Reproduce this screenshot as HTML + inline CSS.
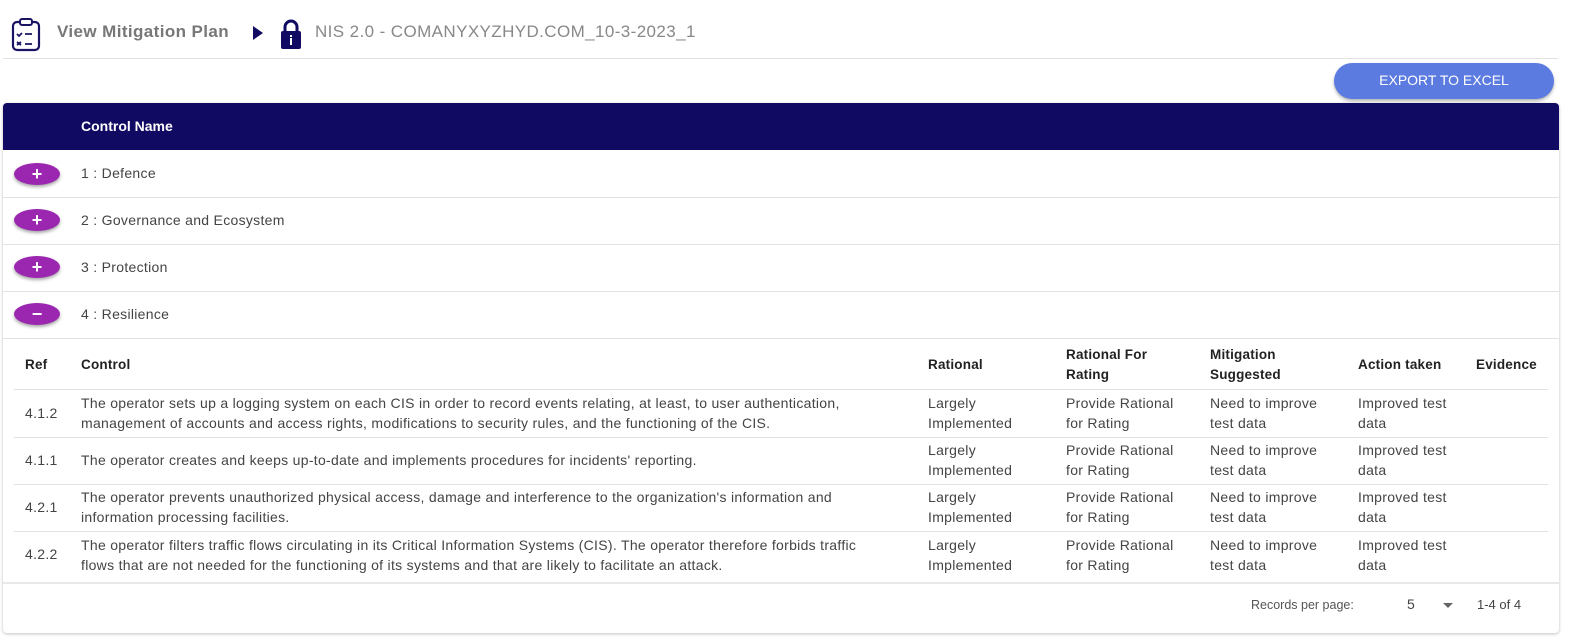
<!DOCTYPE html>
<html><head><meta charset="utf-8"><style>
*{margin:0;padding:0;box-sizing:border-box}
body{width:1588px;height:639px;background:#fff;font-family:"Liberation Sans",sans-serif;position:relative;overflow:hidden;color:#333}
.a{position:absolute;white-space:nowrap}
.t{font-size:14px;color:#444;line-height:20px;letter-spacing:.3px}
.b{font-weight:bold;color:#222;font-size:13.5px;line-height:20px;letter-spacing:.2px}
.btn{position:absolute;left:14px;width:46px;height:22px;border-radius:50%;background:#9b27b0;box-shadow:0 2px 3px rgba(0,0,0,.35);color:#fff;font-weight:bold;text-align:center;font-size:18px;line-height:22px}
.hl{position:absolute;height:1px;background:#e2e2e2}
</style></head><body>
<svg class="a" style="left:11px;top:18px" width="30" height="34" viewBox="0 0 30 34"><rect x="2" y="4" width="26" height="28" rx="4" fill="none" stroke="#1a1464" stroke-width="2.2"/><rect x="9" y="1" width="12" height="6" rx="2" fill="#fff" stroke="#1a1464" stroke-width="2"/><path d="M6 16l2 2 3-3M14 16h7M6 24l4 3M10 24l-4 3M14 26h7" stroke="#1a1464" stroke-width="1.8" fill="none"/></svg>
<div class="a" style="left:57px;top:22px;font-size:17px;font-weight:bold;color:#777;letter-spacing:.4px">View Mitigation Plan</div>
<svg class="a" style="left:252px;top:25px" width="12" height="16"><path d="M1 1L11 8L1 15Z" fill="#110a63"/></svg>
<svg class="a" style="left:280px;top:18px" width="22" height="32" viewBox="0 0 22 32"><path d="M5 14V9a6 6 0 0 1 12 0v5" stroke="#110a63" stroke-width="3" fill="none"/><rect x="1" y="13" width="20" height="18" rx="2" fill="#110a63"/><rect x="10" y="20" width="2" height="7" fill="#fff"/><rect x="10" y="17" width="2" height="2" fill="#fff"/></svg>
<div class="a" style="left:315px;top:22px;font-size:17px;color:#888;letter-spacing:.4px">NIS 2.0 - COMANYXYZHYD.COM_10-3-2023_1</div>
<div class="hl" style="left:3px;top:58px;width:1555px"></div>
<div class="a" style="left:1334px;top:63px;width:220px;height:36px;border-radius:18px;background:#5b7be0;color:#fff;font-size:14px;text-align:center;line-height:34px;box-shadow:0 2px 3px rgba(0,0,0,.3)">EXPORT TO EXCEL</div>
<div class="a" style="left:3px;top:103px;width:1556px;height:530px;border-radius:4px;box-shadow:0 1px 3px rgba(0,0,0,.25)"></div>
<div class="a" style="left:3px;top:103px;width:1556px;height:47px;background:#110a63;border-radius:4px 4px 0 0"></div>
<div class="a" style="left:81px;top:116px;color:#fff;font-weight:bold;font-size:14px;line-height:20px">Control Name</div>
<div class="btn" style="top:163px">+</div><div class="a t" style="left:81px;top:163px">1 : Defence</div>
<div class="hl" style="left:3px;top:197px;width:1556px"></div>
<div class="btn" style="top:209px">+</div><div class="a t" style="left:81px;top:210px">2 : Governance and Ecosystem</div>
<div class="hl" style="left:3px;top:244px;width:1556px"></div>
<div class="btn" style="top:256px">+</div><div class="a t" style="left:81px;top:257px">3 : Protection</div>
<div class="hl" style="left:3px;top:291px;width:1556px"></div>
<div class="btn" style="top:303px">−</div><div class="a t" style="left:81px;top:304px">4 : Resilience</div>
<div class="hl" style="left:3px;top:338px;width:1556px"></div>
<div class="a b" style="left:25px;top:355px">Ref</div>
<div class="a b" style="left:81px;top:355px">Control</div>
<div class="a b" style="left:928px;top:355px">Rational</div>
<div class="a b" style="left:1066px;top:345px">Rational For<br>Rating</div>
<div class="a b" style="left:1210px;top:345px">Mitigation<br>Suggested</div>
<div class="a b" style="left:1358px;top:355px">Action taken</div>
<div class="a b" style="left:1476px;top:355px">Evidence</div>
<div class="hl" style="left:14px;top:389px;width:1534px"></div>

<div class="a t" style="left:25px;top:403px">4.1.2</div>
<div class="a t" style="left:81px;top:393px">The operator sets up a logging system on each CIS in order to record events relating, at least, to user authentication,<br>management of accounts and access rights, modifications to security rules, and the functioning of the CIS.</div>
<div class="a t" style="left:928px;top:393px">Largely<br>Implemented</div><div class="a t" style="left:1066px;top:393px">Provide Rational<br>for Rating</div><div class="a t" style="left:1210px;top:393px">Need to improve<br>test data</div><div class="a t" style="left:1358px;top:393px">Improved test<br>data</div>
<div class="hl" style="left:14px;top:437px;width:1534px"></div>

<div class="a t" style="left:25px;top:450px">4.1.1</div>
<div class="a t" style="left:81px;top:450px">The operator creates and keeps up-to-date and implements procedures for incidents' reporting.</div>
<div class="a t" style="left:928px;top:440px">Largely<br>Implemented</div><div class="a t" style="left:1066px;top:440px">Provide Rational<br>for Rating</div><div class="a t" style="left:1210px;top:440px">Need to improve<br>test data</div><div class="a t" style="left:1358px;top:440px">Improved test<br>data</div>
<div class="hl" style="left:14px;top:484px;width:1534px"></div>

<div class="a t" style="left:25px;top:497px">4.2.1</div>
<div class="a t" style="left:81px;top:487px">The operator prevents unauthorized physical access, damage and interference to the organization's information and<br>information processing facilities.</div>
<div class="a t" style="left:928px;top:487px">Largely<br>Implemented</div><div class="a t" style="left:1066px;top:487px">Provide Rational<br>for Rating</div><div class="a t" style="left:1210px;top:487px">Need to improve<br>test data</div><div class="a t" style="left:1358px;top:487px">Improved test<br>data</div>
<div class="hl" style="left:14px;top:531px;width:1534px"></div>

<div class="a t" style="left:25px;top:544px">4.2.2</div>
<div class="a t" style="left:81px;top:535px">The operator filters traffic flows circulating in its Critical Information Systems (CIS). The operator therefore forbids traffic<br>flows that are not needed for the functioning of its systems and that are likely to facilitate an attack.</div>
<div class="a t" style="left:928px;top:535px">Largely<br>Implemented</div><div class="a t" style="left:1066px;top:535px">Provide Rational<br>for Rating</div><div class="a t" style="left:1210px;top:535px">Need to improve<br>test data</div><div class="a t" style="left:1358px;top:535px">Improved test<br>data</div>
<div class="hl" style="left:3px;top:582px;width:1556px;background:#e8e8e8;height:2px"></div>

<div class="a" style="left:1251px;top:598px;font-size:12.5px;color:#555">Records per page:</div>
<div class="a" style="left:1407px;top:596px;font-size:14px;color:#444">5</div>
<svg class="a" style="left:1443px;top:603px" width="10" height="6"><path d="M0 0h10L5 5z" fill="#666"/></svg>
<div class="a" style="left:1477px;top:597px;font-size:13px;color:#444">1-4 of 4</div>
</body></html>
